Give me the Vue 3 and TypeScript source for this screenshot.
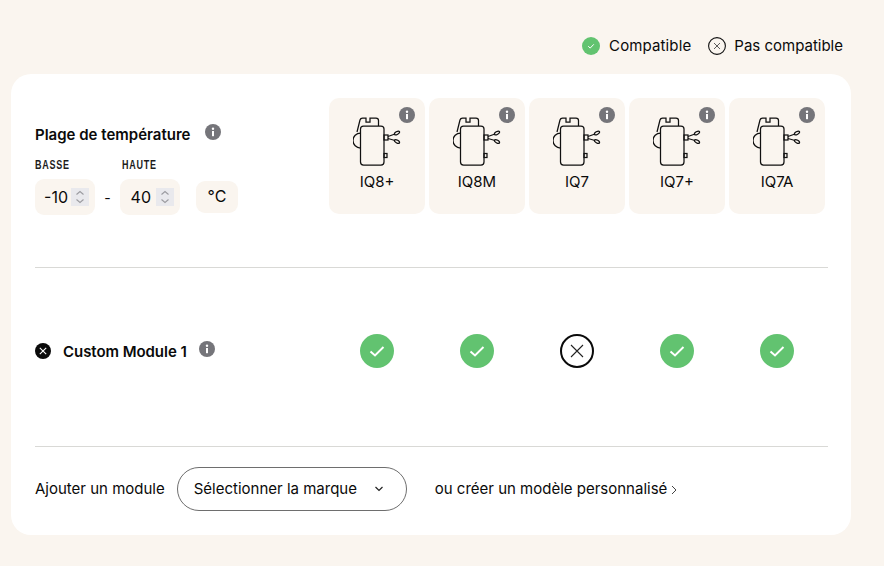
<script setup lang="ts">
const products: string[] = ['IQ8+', 'IQ8M', 'IQ7', 'IQ7+', 'IQ7A']
const compat: boolean[] = [true, true, false, true, true]
</script>

<template>
  <div class="page">
    <div class="legend">
      <span class="legend-item">
        <svg class="lg" width="18" height="18" viewBox="0 0 18 18"><circle cx="9" cy="9" r="9" fill="#62c370"/><path d="M6.2 9.2l2 1.9 3.6-3.8" fill="none" stroke="#fff" stroke-width="1"/></svg>
        Compatible
      </span>
      <span class="legend-item">
        <svg class="lg" width="18" height="18" viewBox="0 0 18 18"><circle cx="9" cy="9" r="8.4" fill="none" stroke="#111" stroke-width="1.1"/><path d="M6 6l6 6M12 6l-6 6" stroke="#333" stroke-width="0.8"/></svg>
        Pas compatible
      </span>
    </div>

    <div class="card">
      <section class="top">
        <div class="temp">
          <div class="temp-title">
            <span>Plage de température</span>
            <svg class="info title-info" width="16" height="16" viewBox="0 0 16 16"><circle cx="8" cy="8" r="8" fill="#75757a"/><rect x="7" y="7" width="2" height="5.2" fill="#fff"/><circle cx="8" cy="4.7" r="1.2" fill="#fff"/></svg>
          </div>
          <div class="labels">
            <span class="lbl">BASSE</span>
            <span class="lbl">HAUTE</span>
          </div>
          <div class="inputs">
            <div class="num">
              <span>-10</span>
              <span class="spin"><svg width="18" height="18" viewBox="0 0 18 18"><path d="M5.5 6.5L9 3.5l3.5 3M5.5 11.5l3.5 3 3.5-3" fill="none" stroke="#9b9ba0" stroke-width="1.1"/></svg></span>
            </div>
            <span class="dash">-</span>
            <div class="num">
              <span>40</span>
              <span class="spin"><svg width="18" height="18" viewBox="0 0 18 18"><path d="M5.5 6.5L9 3.5l3.5 3M5.5 11.5l3.5 3 3.5-3" fill="none" stroke="#9b9ba0" stroke-width="1.1"/></svg></span>
            </div>
            <div class="unit">°C</div>
          </div>
        </div>
        <div class="products">
          <div v-for="p in products" :key="p" class="product">
            <svg class="info-p" width="16" height="16" viewBox="0 0 16 16"><circle cx="8" cy="8" r="8" fill="#75757a"/><rect x="7" y="7" width="2" height="5.2" fill="#fff"/><circle cx="8" cy="4.7" r="1.2" fill="#fff"/></svg>
            <svg class="device" width="48" height="50" viewBox="0 0 48 50" fill="none" stroke="#111" stroke-width="1.25">
              <rect x="7.500" y="10" width="23.500" height="39" rx="3"/>
              <path d="M4 16L7 4Q7.500 2 9.500 2H13V6H17V2H23Q25.500 2 25.500 4.500V10"/>
              <path d="M7.500 17A7.500 7.500 0 0 0 7.500 32"/>
              <rect x="31" y="19" width="4" height="5"/>
              <rect x="31" y="37.500" width="3" height="4"/>
              <path d="M35 20.500L42 18M35 22.500L42 24.500"/>
              <ellipse cx="44" cy="17" rx="2.800" ry="1.400" transform="rotate(-30 44 17)"/>
              <ellipse cx="44" cy="25.500" rx="2.800" ry="1.400" transform="rotate(30 44 25.500)"/>
            </svg>
            <span class="pname">{{ p }}</span>
          </div>
        </div>
      </section>

      <section class="module">
        <div class="mod-name">
          <svg class="x-black" width="16" height="16" viewBox="0 0 16 16"><circle cx="8" cy="8" r="8" fill="#0a0a0a"/><path d="M4.800 4.800l6.400 6.400M11.200 4.800l-6.400 6.400" stroke="#fff" stroke-width="1.100"/></svg>
          <span class="mod-text">Custom Module 1</span>
          <svg class="info mod-info" width="16" height="16" viewBox="0 0 16 16"><circle cx="8" cy="8" r="8" fill="#75757a"/><rect x="7" y="7" width="2" height="5.2" fill="#fff"/><circle cx="8" cy="4.7" r="1.2" fill="#fff"/></svg>
        </div>
        <div class="marks">
          <div v-for="(ok, i) in compat" :key="i" class="mark">
            <svg v-if="ok" width="34" height="34" viewBox="0 0 34 34"><circle cx="17" cy="17" r="17" fill="#62c370"/><path d="M10.500 17.500l4.500 4 8.500-8.500" fill="none" stroke="#fff" stroke-width="2"/></svg>
            <svg v-else width="34" height="34" viewBox="0 0 34 34"><circle cx="17" cy="17" r="16" fill="#fff" stroke="#0a0a0a" stroke-width="2"/><path d="M11 11l12 12M23 11L11 23" stroke="#222" stroke-width="1.100"/></svg>
          </div>
        </div>
      </section>

      <section class="add">
        <span class="txt">Ajouter un module</span>
        <div class="select">
          <span class="txt">Sélectionner la marque</span>
          <svg width="10" height="6" viewBox="0 0 10 6"><path d="M1.500 1L5 4.500 8.500 1" fill="none" stroke="#222" stroke-width="1.200"/></svg>
        </div>
        <span class="txt create">ou créer un modèle personnalisé</span>
        <svg class="chev" width="6" height="10" viewBox="0 0 6 10"><path d="M1 1l4 4-4 4" fill="none" stroke="#444" stroke-width="1"/></svg>
      </section>
    </div>
  </div>
</template>

<style>
html, body { margin: 0; background: #faf5ef; }
</style>

<style scoped>
.page {
  width: 884px;
  height: 566px;
  box-sizing: border-box;
  padding: 37px 33px 0 11px;
  background: #faf5ef;
  font-family: Inter, "Liberation Sans", sans-serif;
  color: #0a0a0a;
  font-size: 15px;
  overflow: hidden;
}
.legend {
  display: flex;
  justify-content: flex-end;
  gap: 17px;
  height: 18px;
  line-height: 18px;
  margin-bottom: 19px;
  padding-right: 8px;
  letter-spacing: 0.13px;
}
.legend-item { display: flex; align-items: center; gap: 9px; }
.legend-item + .legend-item { gap: 8px; letter-spacing: 0; }
.lg { flex: none; }
.card {
  width: 840px;
  height: 461px;
  background: #fff;
  border-radius: 20px;
  box-sizing: border-box;
  padding: 24px 24px 0;
}
.top {
  display: flex;
  height: 169px;
  border-bottom: 1px solid #d9d9d6;
  width: 793px;
}
.temp { width: 294px; padding-top: 28px; box-sizing: border-box; }
.temp-title { display: flex; align-items: flex-start; gap: 15px; font-weight: 600; line-height: 18px; }
.title-info { margin-top: -2px; }
.labels { display: flex; margin-top: 15px; height: 12px; }
.lbl {
  width: 87px;
  font-family: "Liberation Sans", sans-serif;
  font-size: 12px;
  font-weight: 700;
  line-height: 12px;
  letter-spacing: 1px;
  color: #1c1c1c;
  transform: scaleX(0.75);
  transform-origin: left;
}
.inputs { display: flex; align-items: flex-start; margin-top: 8px; font-size: 16px; }
.num {
  width: 60px;
  height: 36px;
  background: #faf5ef;
  border-radius: 9px;
  display: flex;
  align-items: center;
  justify-content: flex-end;
  gap: 3px;
  padding-right: 6px;
  box-sizing: border-box;
}
.num + .dash + .num { gap: 5px; margin-right: 16px; }
.spin { width: 18px; height: 18px; background: #e9e9ed; display: block; }
.spin svg { display: block; }
.dash { width: 25px; text-align: center; line-height: 38px; font-size: 14px; }
.unit {
  width: 42px;
  height: 32px;
  margin-top: 2px;
  line-height: 30px;
  text-align: center;
  background: #faf5ef;
  border-radius: 9px;
  font-size: 16px;
}
.products { display: flex; gap: 4px; align-items: flex-start; }
.product {
  position: relative;
  width: 96px;
  height: 116px;
  background: #faf5ef;
  border-radius: 10px;
  display: flex;
  flex-direction: column;
  align-items: center;
  padding-top: 18px;
  box-sizing: border-box;
}
.info-p { position: absolute; top: 9px; right: 10px; }
.device { display: block; margin-left: 0; }
.pname { margin-top: 7px; line-height: 18px; font-size: 15px; }
.module {
  display: flex;
  align-items: center;
  height: 166px;
  padding-bottom: 12px;
  width: 793px;
  border-bottom: 1px solid #d9d9d6;
}
.mod-name { width: 294px; display: flex; align-items: center; font-weight: 600; }
.mod-text { margin-left: 12px; letter-spacing: -0.05px; }
.mod-info { margin-left: 12px; margin-top: -4px; }
.marks { display: flex; gap: 4px; }
.mark { width: 96px; display: flex; justify-content: center; }
.mark svg { display: block; }
.add {
  display: flex;
  align-items: center;
  width: 793px;
  height: 84px;
}
.txt { padding-bottom: 2px; }
.select {
  width: 230px;
  height: 44px;
  box-sizing: border-box;
  border: 1px solid #6e6e6e;
  border-radius: 22px;
  margin-left: 12px;
  padding: 0 22px 0 16px;
  display: flex;
  align-items: center;
  justify-content: space-between;
}
.create { margin-left: 28px; }
.chev { margin-left: 4px; margin-top: 2px; }
</style>
